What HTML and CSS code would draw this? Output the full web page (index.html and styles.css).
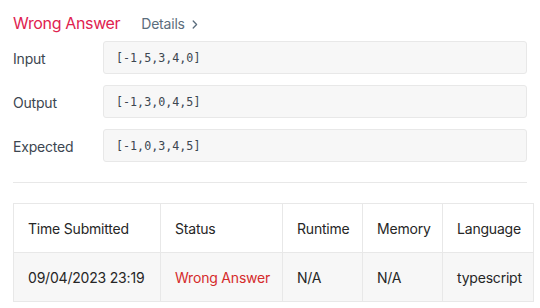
FILE: index.html
```html
<!DOCTYPE html>
<html lang="en">
<head>
    <meta charset="UTF-8">
    <title>Submission Result</title>
    <link rel="stylesheet" href="styles.css">
</head>
<body>
    <div class="result">
        <!-- Header -->
        <div class="result-header">
            <span class="result-title">Wrong Answer</span>
            <a class="details-link" href="#">Details
                <svg width="6" height="9" viewBox="0 0 6 9"><path d="M1.2 1 L4.6 4.5 L1.2 8" fill="none" stroke="currentColor" stroke-width="1.3" stroke-linecap="round" stroke-linejoin="round"/></svg>
            </a>
        </div>

        <!-- Test case -->
        <div class="case-grid">
            <div class="case-label">Input</div>
            <div class="case-box">[-1,5,3,4,0]</div>
            <div class="case-label">Output</div>
            <div class="case-box">[-1,3,0,4,5]</div>
            <div class="case-label">Expected</div>
            <div class="case-box">[-1,0,3,4,5]</div>
        </div>

        <hr class="divider">

        <table class="submissions">
            <colgroup>
                <col class="col-time">
                <col class="col-status">
                <col class="col-small">
                <col class="col-small">
                <col class="col-lang">
            </colgroup>
            <thead>
                <tr>
                    <th>Time Submitted</th>
                    <th>Status</th>
                    <th>Runtime</th>
                    <th>Memory</th>
                    <th>Language</th>
                </tr>
            </thead>
            <tbody>
                <tr>
                    <td>09/04/2023 23:19</td>
                    <td class="status-wrong">Wrong Answer</td>
                    <td>N/A</td>
                    <td>N/A</td>
                    <td>typescript</td>
                </tr>
            </tbody>
        </table>
    </div>
</body>
</html>
```

FILE: styles.css
```css
* {
    margin: 0;
    padding: 0;
    box-sizing: border-box;
}

body {
    font-family: 'Inter', 'Noto Sans', sans-serif;
    background: #fff;
    color: #262626;
    overflow: hidden;
}

.result {
    padding: 12px 13px 0 13px;
}

/* Header */
.result-header {
    display: flex;
    align-items: baseline;
    gap: 21px;
    height: 22px;
    line-height: 22px;
}

.result-title {
    font-size: 16px;
    letter-spacing: -0.35px;
    color: #e0224f;
}

.details-link {
    display: flex;
    align-items: center;
    gap: 7px;
    font-size: 14px;
    letter-spacing: -0.2px;
    color: #5b6d7d;
    text-decoration: none;
}

/* Input / Output / Expected */
.case-grid {
    display: grid;
    grid-template-columns: 90px 1fr;
    row-gap: 11px;
    margin-top: 7px;
    align-items: center;
}

.case-label {
    font-size: 14px;
    letter-spacing: -0.2px;
    color: #3c4650;
    padding-top: 2px;
}

.case-box {
    height: 33px;
    padding: 0 12px;
    display: flex;
    align-items: center;
    background: #f7f7f7;
    border: 1px solid #e8e8e8;
    border-radius: 3px;
    font-family: 'DejaVu Sans Mono', monospace;
    font-size: 11.7px;
    color: #3c4650;
}

.divider {
    border: none;
    border-top: 1px solid #e8e8e8;
    margin: 20px 0 20px 0;
}

/* Submissions table */
.submissions {
    border-collapse: collapse;
    table-layout: fixed;
    width: 520px;
    white-space: nowrap;
    font-size: 14px;
    letter-spacing: -0.2px;
}

.col-time { width: 147px; }
.col-status { width: 122px; }
.col-small { width: 80px; }
.col-lang { width: 91px; }

.submissions th,
.submissions td {
    border: 1px solid #e8e8e8;
    padding: 15px 0 13px 14px;
    line-height: 20px;
    text-align: left;
    font-weight: normal;
}

.submissions tbody tr {
    background: #f7f7f7;
}

.status-wrong {
    color: #d52b2b;
}
```
